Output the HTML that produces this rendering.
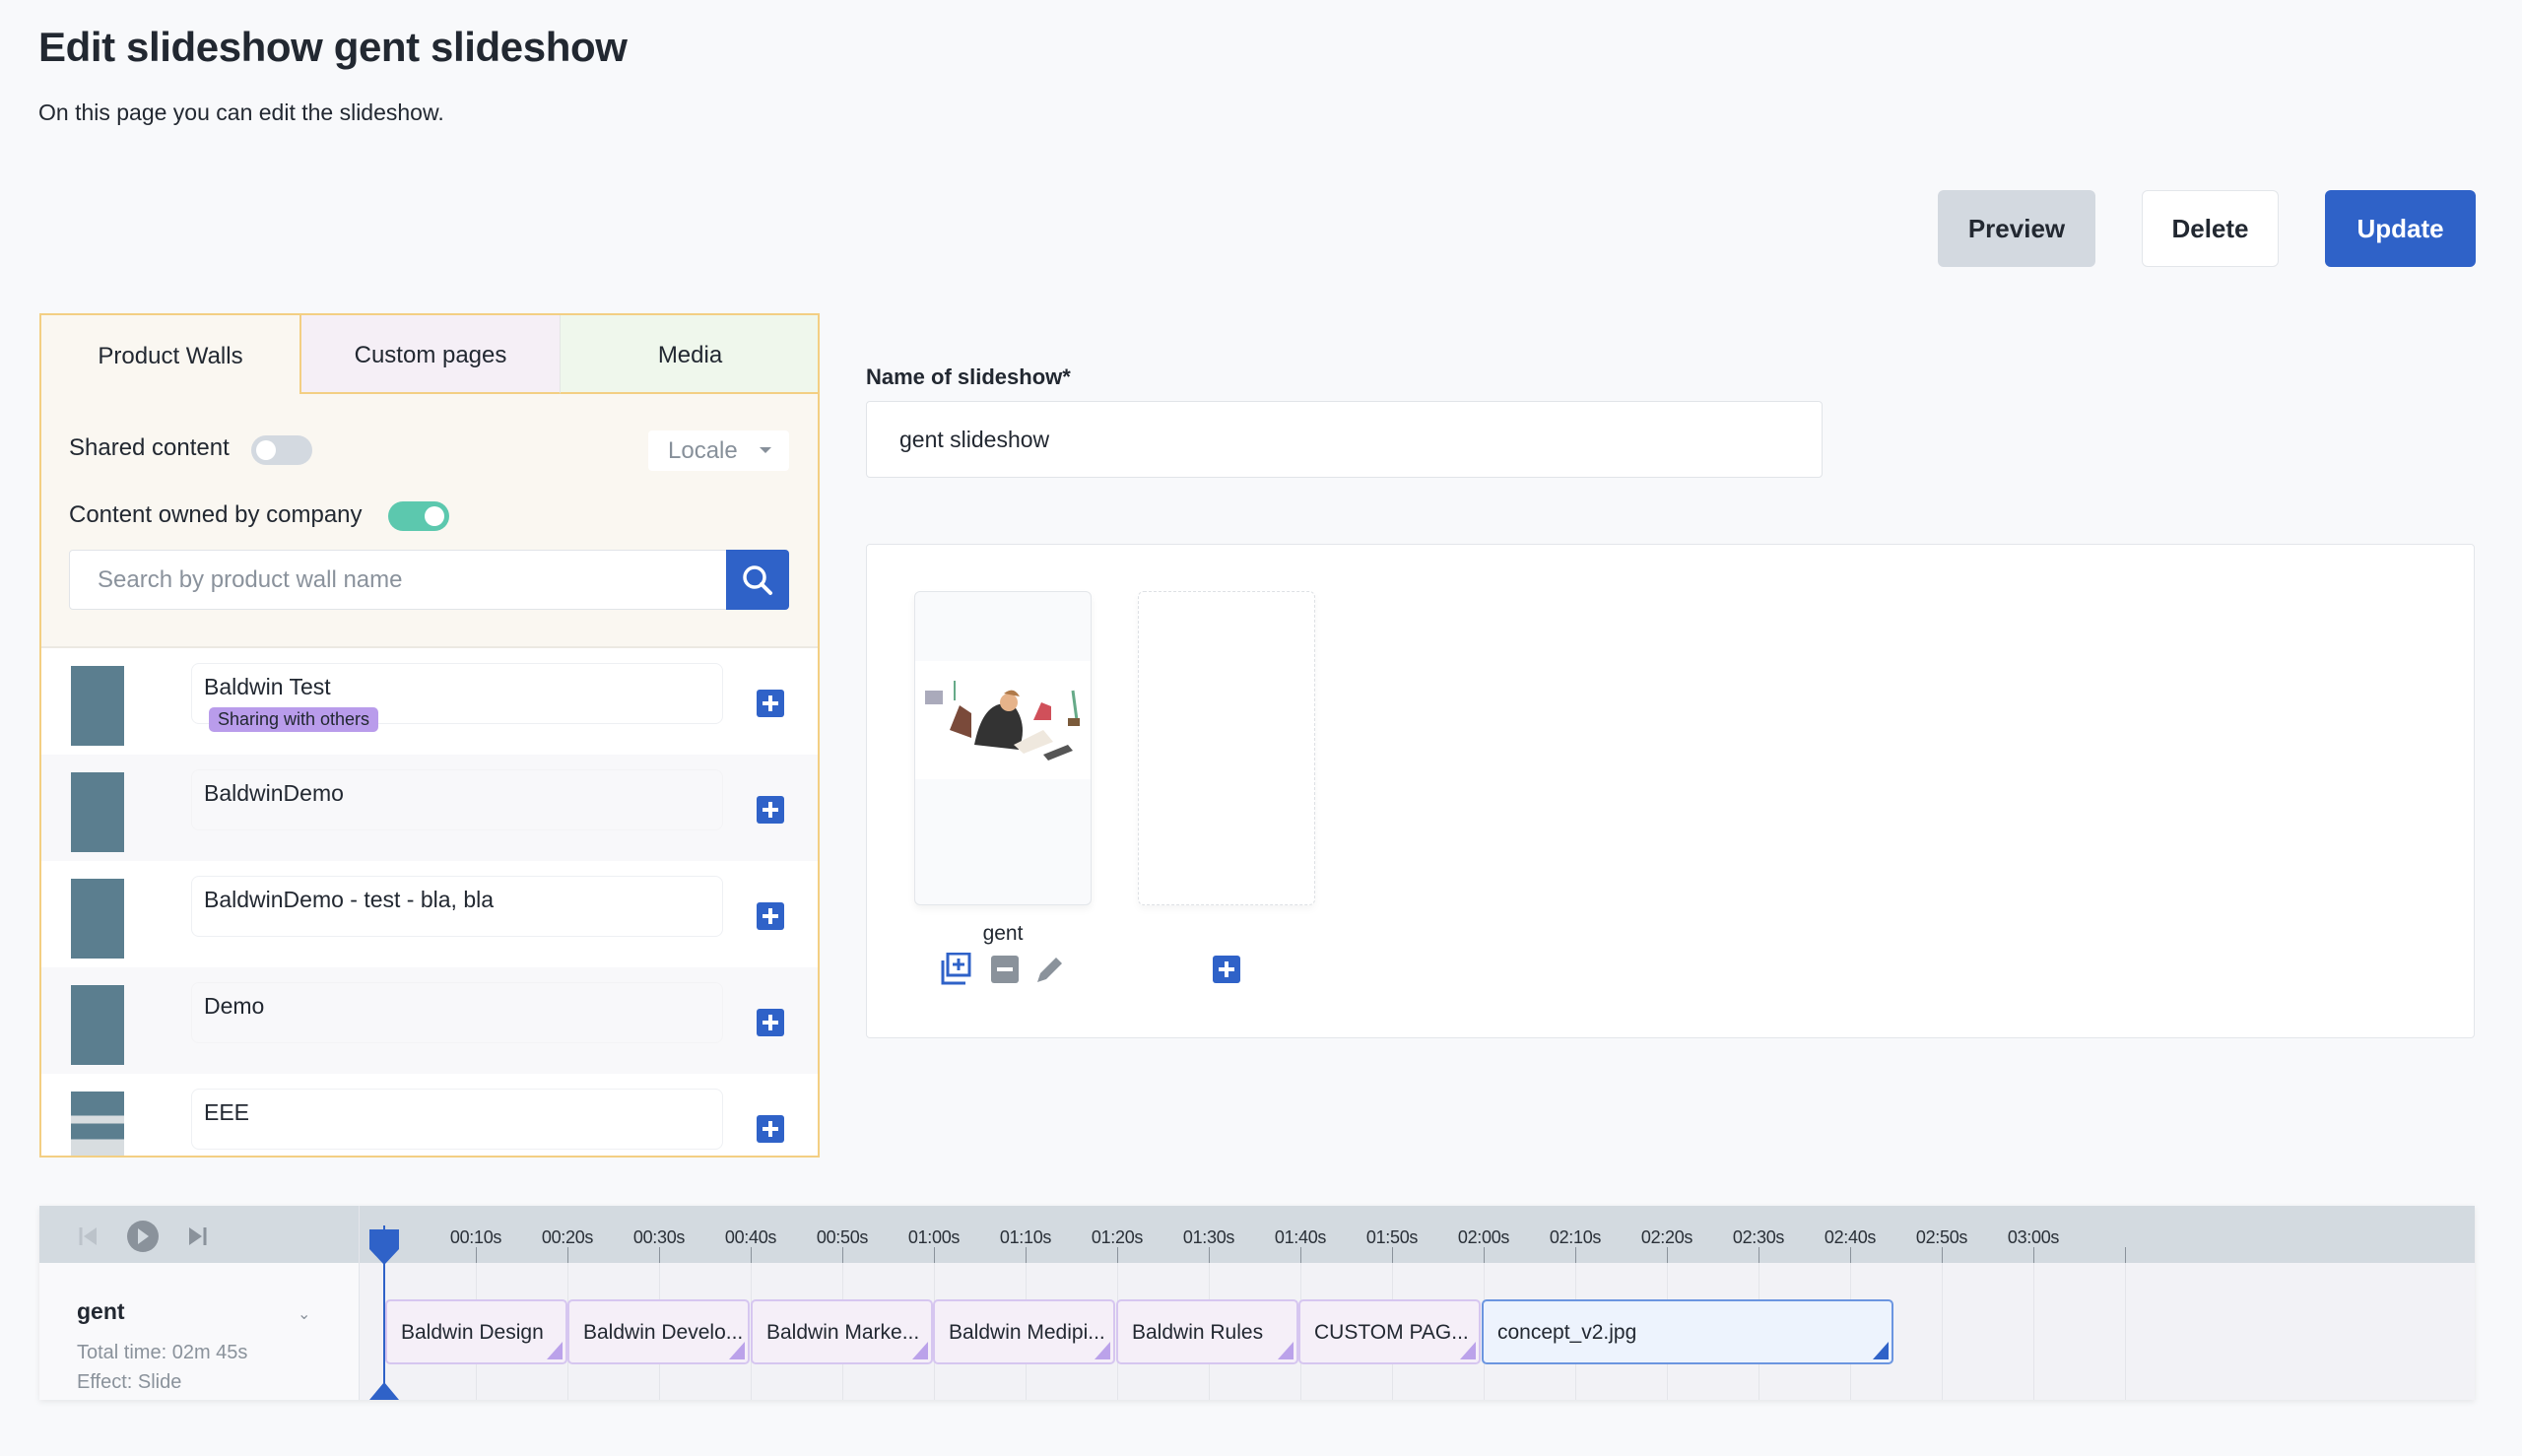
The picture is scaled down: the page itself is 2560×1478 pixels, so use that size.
<!DOCTYPE html>
<html><head><meta charset="utf-8"><style>
*{box-sizing:border-box;margin:0;padding:0}
body{width:2560px;height:1478px;background:#f8f9fb;font-family:"Liberation Sans",sans-serif;color:#222831;position:relative;overflow:hidden}
.a{position:absolute}
h1{position:absolute;left:39px;top:24px;font-size:42px;font-weight:bold;letter-spacing:-0.4px}
.sub{left:39px;top:101px;font-size:23px}
.btn{position:absolute;top:193px;height:78px;border-radius:6px;font-size:26px;font-weight:bold;display:flex;align-items:center;justify-content:center}
.panel{left:40px;top:318px;width:792px;height:857px;border:2px solid #f3cf83;background:#faf7f1;overflow:hidden}
.tab{position:absolute;top:0;height:80px;display:flex;align-items:center;justify-content:center;font-size:24px;padding-top:4px}
.tgl{position:absolute;width:62px;height:30px;border-radius:15px}
.tgl i{position:absolute;top:5px;width:20px;height:20px;border-radius:50%;background:#fff}
.row{position:absolute;left:0;width:788px;height:108px}
.thumb{position:absolute;left:30px;top:18px;width:54px;height:81px;background:#5b7e8f}
.nm{position:absolute;left:152px;top:15px;width:540px;height:62px;border:1px solid #eef0f3;border-radius:8px;font-size:23px;padding:10px 0 0 12px}
.plus{position:absolute;left:726px;top:42px;width:28px;height:28px;background:#2f62c8;border-radius:3px}
.plus:before,.plus:after{content:"";position:absolute;background:#fff}
.plus:before{left:6px;top:12px;width:16px;height:4px}
.plus:after{left:12px;top:6px;width:4px;height:16px}
.tl{left:40px;top:1224px;width:2472px;height:197px;background:#f2f2f6;box-shadow:0 2px 6px rgba(0,0,0,.08);overflow:hidden}
.tick{position:absolute;top:42px;width:1px;height:155px;background:#e4e5ea}
.tick b{position:absolute;top:0;left:0;width:1px;height:16px;background:#8a929b}
.lbl{position:absolute;top:22px;font-size:18px;transform:translateX(-50%);color:#2a3038;letter-spacing:-0.3px}
.clip{position:absolute;top:95px;height:66px;width:185px;background:#f5eff8;border:2px solid #d6c6f0;border-radius:5px;font-size:21px;padding:20px 0 0 14px;white-space:nowrap}
.clip:after{content:"";position:absolute;right:3px;bottom:3px;border-left:16px solid transparent;border-bottom:18px solid #bba2ea}
.clip.bl:after{border-bottom-color:#2f62c8}
</style></head><body>
<h1>Edit slideshow gent slideshow</h1>
<div class="a sub">On this page you can edit the slideshow.</div>
<div class="btn" style="left:1967px;width:160px;background:#d3d9e0">Preview</div>
<div class="btn" style="left:2174px;width:139px;background:#fff;border:1px solid #e3e6ea">Delete</div>
<div class="btn" style="left:2360px;width:153px;background:#2f62c8;color:#fff">Update</div>

<div class="a panel">
 <div class="tab" style="left:0;width:262px;background:#faf7f1">Product Walls</div>
 <div class="tab" style="left:262px;width:264px;background:#f5eff6;border-left:2px solid #f3cf83;border-bottom:2px solid #f3cf83">Custom pages</div>
 <div class="tab" style="left:526px;width:264px;background:#eff7ec;border-left:1px solid #e3e6e3;border-bottom:2px solid #f3cf83">Media</div>
 <div class="a" style="left:28px;top:121px;font-size:24px">Shared content</div>
 <div class="tgl" style="left:213px;top:122px;background:#d3d9e0"><i style="left:5px"></i></div>
 <div class="a" style="left:616px;top:117px;width:143px;height:41px;background:#fff;border-radius:4px;color:#87909a;font-size:24px;padding:7px 0 0 20px">Locale<span style="position:absolute;left:113px;top:17px;border-left:6px solid transparent;border-right:6px solid transparent;border-top:6px solid #87909a"></span></div>
 <div class="a" style="left:28px;top:189px;font-size:24px">Content owned by company</div>
 <div class="tgl" style="left:352px;top:189px;background:#5cc8ae"><i style="left:37px"></i></div>
 <div class="a" style="left:28px;top:238px;width:668px;height:61px;background:#fff;border:1px solid #e1e4e8;border-radius:4px 0 0 4px;color:#8a929c;font-size:24px;padding:16px 0 0 28px">Search by product wall name</div>
 <div class="a" style="left:695px;top:238px;width:64px;height:61px;background:#2f62c8;border-radius:0 4px 4px 0"><svg width="64" height="61"><circle cx="29" cy="28" r="10" fill="none" stroke="#fff" stroke-width="3.5"/><path d="M36 35l9 9" stroke="#fff" stroke-width="4" stroke-linecap="round"/></svg></div>
 <div class="a" style="left:0;top:336px;width:790px;height:2px;background:#ece9e2"></div>
 <div class="row" style="top:338px;background:#fff"><div class="thumb"></div><div class="nm">Baldwin Test</div><div class="a" style="left:170px;top:60px;width:172px;height:25px;background:#b99ceb;border-radius:5px;font-size:18px;text-align:center;line-height:25px">Sharing with others</div><div class="plus"></div></div>
 <div class="row" style="top:446px;background:#f8f8fa"><div class="thumb"></div><div class="nm" style="border-color:#f3f3f5">BaldwinDemo</div><div class="plus"></div></div>
 <div class="row" style="top:554px;background:#fff"><div class="thumb"></div><div class="nm">BaldwinDemo - test - bla, bla</div><div class="plus"></div></div>
 <div class="row" style="top:662px;background:#f8f8fa"><div class="thumb"></div><div class="nm" style="border-color:#f3f3f5">Demo</div><div class="plus"></div></div>
 <div class="row" style="top:770px;background:#fff"><div class="thumb" style="background:linear-gradient(#5b7e8f 0 30%,#d8dde0 30% 40%,#5b7e8f 40% 60%,#d8dde0 60%)"></div><div class="nm">EEE</div><div class="plus"></div></div>
</div>

<div class="a" style="left:879px;top:370px;font-size:22px;font-weight:bold">Name of slideshow*</div>
<div class="a" style="left:879px;top:407px;width:971px;height:78px;background:#fff;border:1px solid #e1e4e8;border-radius:4px;font-size:23px;padding:25px 0 0 33px">gent slideshow</div>

<div class="a" style="left:879px;top:552px;width:1633px;height:502px;background:#fff;border:1px solid #e3e6ea;border-radius:4px">
 <div class="a" style="left:48px;top:47px;width:180px;height:319px;background:#f9fafc;border:1px solid #e3e6ea;border-radius:6px;box-shadow:0 4px 8px rgba(0,0,0,.05);overflow:hidden">
  <div class="a" style="left:0;top:70px;width:180px;height:120px;background:#fff">
   <svg width="180" height="120"><rect x="10" y="30" width="18" height="14" fill="#aab"/><path d="M35 70l10-25 12 8 0 25z" fill="#7a4a3a"/><path d="M60 85q10-50 40-40q15 20 5 45z" fill="#333"/><circle cx="95" cy="42" r="9" fill="#e6b38a"/><path d="M90 33q10-8 16 3" fill="#b07a4a"/><path d="M120 60l8-18 10 4 0 14z" fill="#d0505a"/><path d="M100 85l30-15 10 12-30 12z" fill="#efe8de"/><path d="M130 95l25-10 5 6-25 10z" fill="#555"/><path d="M160 30l4 30" stroke="#6a8" stroke-width="3"/><rect x="155" y="58" width="12" height="8" fill="#7a5a3a"/><path d="M40 40l0-20" stroke="#6a8" stroke-width="2"/></svg>
  </div>
 </div>
 <div class="a" style="left:275px;top:47px;width:180px;height:319px;border:1px dashed #dde0e4;border-radius:6px;box-shadow:0 4px 8px rgba(0,0,0,.04)"></div>
 <div class="a" style="left:48px;top:383px;width:180px;text-align:center;font-size:21px">gent</div>
 <svg class="a" style="left:74px;top:414px" width="130" height="34"><rect x="8" y="1" width="22" height="22" fill="none" stroke="#2f62c8" stroke-width="3"/><path d="M19 6v12M13 12h12" stroke="#2f62c8" stroke-width="3"/><path d="M3 8v23h23" fill="none" stroke="#2f62c8" stroke-width="3"/><rect x="52" y="3" width="28" height="28" rx="3" fill="#8a929b"/><path d="M58 17h16" stroke="#fff" stroke-width="4"/><path d="M99 30l3-9 16-16 6 6-16 16z" fill="#8a929b"/></svg>
 <div class="plus" style="left:351px;top:417px"></div>
</div>

<div class="a tl">
 <div class="a" style="left:0;top:0;width:2472px;height:58px;background:#d3dae0"></div>
 <div class="a" style="left:0;top:58px;width:324px;height:139px;background:#f9f9fb"></div>
 <div class="a" style="left:324px;top:0;width:1px;height:197px;background:#e3e5ea"></div>
 <svg class="a" style="left:30px;top:14px" width="170" height="34"><path d="M12 8v18" stroke="#bcc3ca" stroke-width="3"/><path d="M28 8l-13 9 13 9z" fill="#bcc3ca"/><circle cx="75" cy="17" r="16" fill="#8a929b"/><path d="M70 9l11 8-11 8z" fill="#d3dae0"/><path d="M122 8l13 9-13 9z" fill="#8a929b"/><path d="M138 8v18" stroke="#8a929b" stroke-width="3"/></svg>
 <div class="a" style="left:38px;top:94px;font-size:23px;font-weight:bold">gent</div>
 <div class="a" style="left:262px;top:100px;font-size:16px;color:#8a929b">&#8964;</div>
 <div class="a" style="left:38px;top:138px;font-size:20px;color:#8a929b">Total time: 02m 45s</div>
 <div class="a" style="left:38px;top:168px;font-size:20px;color:#8a929b">Effect: Slide</div>
 <div class="tick" style="left:443px"><b></b></div><div class="lbl" style="left:443px">00:10s</div>
 <div class="tick" style="left:536px"><b></b></div><div class="lbl" style="left:536px">00:20s</div>
 <div class="tick" style="left:629px"><b></b></div><div class="lbl" style="left:629px">00:30s</div>
 <div class="tick" style="left:722px"><b></b></div><div class="lbl" style="left:722px">00:40s</div>
 <div class="tick" style="left:815px"><b></b></div><div class="lbl" style="left:815px">00:50s</div>
 <div class="tick" style="left:908px"><b></b></div><div class="lbl" style="left:908px">01:00s</div>
 <div class="tick" style="left:1001px"><b></b></div><div class="lbl" style="left:1001px">01:10s</div>
 <div class="tick" style="left:1094px"><b></b></div><div class="lbl" style="left:1094px">01:20s</div>
 <div class="tick" style="left:1187px"><b></b></div><div class="lbl" style="left:1187px">01:30s</div>
 <div class="tick" style="left:1280px"><b></b></div><div class="lbl" style="left:1280px">01:40s</div>
 <div class="tick" style="left:1373px"><b></b></div><div class="lbl" style="left:1373px">01:50s</div>
 <div class="tick" style="left:1466px"><b></b></div><div class="lbl" style="left:1466px">02:00s</div>
 <div class="tick" style="left:1559px"><b></b></div><div class="lbl" style="left:1559px">02:10s</div>
 <div class="tick" style="left:1652px"><b></b></div><div class="lbl" style="left:1652px">02:20s</div>
 <div class="tick" style="left:1745px"><b></b></div><div class="lbl" style="left:1745px">02:30s</div>
 <div class="tick" style="left:1838px"><b></b></div><div class="lbl" style="left:1838px">02:40s</div>
 <div class="tick" style="left:1931px"><b></b></div><div class="lbl" style="left:1931px">02:50s</div>
 <div class="tick" style="left:2024px"><b></b></div><div class="lbl" style="left:2024px">03:00s</div>
 <div class="tick" style="left:2117px"><b></b></div>
 <div class="clip" style="left:351px">Baldwin Design</div>
 <div class="clip" style="left:536px">Baldwin Develo...</div>
 <div class="clip" style="left:722px">Baldwin Marke...</div>
 <div class="clip" style="left:907px">Baldwin Medipi...</div>
 <div class="clip" style="left:1093px">Baldwin Rules</div>
 <div class="clip" style="left:1278px">CUSTOM PAG...</div>
 <div class="clip bl" style="left:1464px;width:418px;background:#edf3fd;border-color:#6b95e0">concept_v2.jpg</div>
 <div class="a" style="left:349px;top:20px;width:2px;height:177px;background:#2f62c8"></div>
 <svg class="a" style="left:335px;top:24px" width="30" height="36"><path d="M0 0h30v20l-15 16-15-16z" fill="#2f62c8"/></svg>
 <svg class="a" style="left:335px;top:179px" width="30" height="18"><path d="M15 0l15 18h-30z" fill="#2f62c8"/></svg>
</div>
</body></html>
